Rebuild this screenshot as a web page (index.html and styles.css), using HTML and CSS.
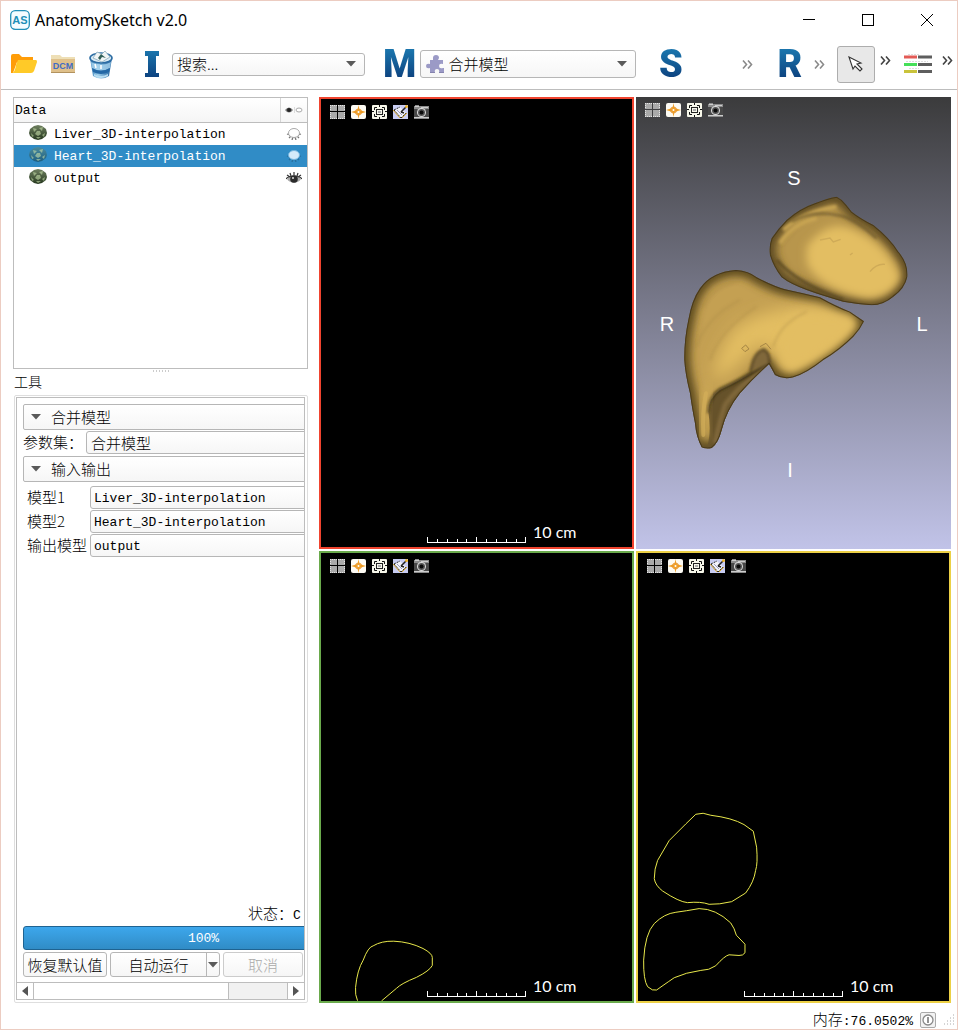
FILE: index.html
```html
<!DOCTYPE html>
<html lang="zh-CN">
<head>
<meta charset="utf-8">
<meta name="viewport" content="width=device-width, initial-scale=1">
<title>AnatomySketch v2.0</title>
<link rel="stylesheet" href="styles.css">
</head>
<body>
<svg class="defs" width="0" height="0" aria-hidden="true">
  <defs>
    <linearGradient id="blue" x1="0" y1="0" x2="0" y2="1"><stop offset="0" stop-color="#1a74ac"/><stop offset="1" stop-color="#0d4380"/></linearGradient>
    <linearGradient id="ball" x1="0" y1="0" x2="0" y2="1"><stop offset="0" stop-color="#6f8060"/><stop offset="1" stop-color="#26381f"/></linearGradient>
    <linearGradient id="ballSel" x1="0" y1="0" x2="0" y2="1"><stop offset="0" stop-color="#4c8b9c"/><stop offset="1" stop-color="#1d5e80"/></linearGradient>
    <linearGradient id="bin" x1="0" y1="0" x2="1" y2="0"><stop offset="0" stop-color="#2f78b4"/><stop offset=".35" stop-color="#9fd0ec"/><stop offset="1" stop-color="#1f5f9c"/></linearGradient>
    <symbol id="i-grid" viewBox="0 0 15 14"><path fill="#a9a9a9" d="M0 0h7v6H0zM8 0h7v6H8zM0 7h7v7H0zM8 7h7v7H8z"/><path stroke="#e4e4e4" stroke-dasharray="1 1" d="M0 .5h7M8 .5h7M0 13.500h7M8 13.500h7M.5 0v6M.5 7v7M14.500 0v6M14.500 7v7"/></symbol>
    <symbol id="i-cross" viewBox="0 0 15 14"><rect width="15" height="14" rx="2" fill="#fdfbf4"/><path fill="#f0a028" d="M7.500 0l1 5L15 7 8.500 9l-1 5-1-5L0 7l6.500-2z"/><circle cx="7.500" cy="7" r="3" fill="none" stroke="#e9962a"/><circle cx="7.500" cy="7" r="1" fill="#fff"/></symbol>
    <symbol id="i-target" viewBox="0 0 15 14"><rect width="15" height="14" rx="1" fill="#f7f7ea"/><path fill="none" stroke="#111" d="M2.500 5V2.500H5M10 2.500h2.500V5M2.500 9v2.500H5M10 11.500h2.500V9M7.500 0v2M7.500 12v2M0 6.500h2M13 6.500h2"/><rect x="4.500" y="4.500" width="6" height="5" fill="none" stroke="#222"/><rect x="6.500" y="6.500" width="2" height="1" fill="#fff" stroke="#aaa"/></symbol>
    <symbol id="i-note" viewBox="0 0 15 14"><rect width="15" height="14" fill="#c9cdf2"/><path d="M1 5l6-3 6 6-5 5z" fill="#f4f4fb"/><path d="M1 5l6-3M1 5l7 8M8 13l5-5" stroke="#222" stroke-dasharray="2 1"/><path d="M0 5l7 8" stroke="#d9a92d"/><path d="M9 13l5-5" stroke="#d9a92d"/><path d="M13 2L8 7M8 7l3 1" stroke="#222" stroke-width="1.500"/><path d="M4 5l5 5" stroke="#9a9dc4"/><circle cx="13.500" cy="1.500" r="1.500" fill="#efb52e"/></symbol>
    <symbol id="i-camera" viewBox="0 0 15 14"><path d="M0 1h1V0h4v1h10v13H0z" fill="#8c8c8c"/><path d="M0 4h15v8H0z" fill="#484848"/><path d="M1 1.500h4M7 2.500h7M0 12.500h15" stroke="#ccc"/><circle cx="7.500" cy="7.500" r="4.500" fill="#ddd"/><circle cx="7.500" cy="7.500" r="3.500" fill="#555"/><circle cx="7.500" cy="7.500" r="2" fill="#0a0a0a"/></symbol>
    <symbol id="i-more" viewBox="0 0 11 9"><path d="M1 .5l3.500 4L1 8.500M6 .5l3.500 4L6 8.500" fill="none" stroke="currentColor" stroke-width="1.600"/></symbol>
    <symbol id="i-down" viewBox="0 0 10 6"><path d="M0 0h10L5 5.500z" fill="#5a5a5a"/></symbol>
    <symbol id="i-ball" viewBox="0 0 18 15"><path d="M5 1l4-1 4 1 4 3 1 4-1 3-4 3-4 1-4-1-4-3-1-3 1-4z"/><path d="M4 3l4 1-3 3zM10 3l4-1-1 4zM8 6h3l1 3-3 2-3-2zM2 8l3 3-2 1zM13 10l3-2-1 4zM7 12h5l-3 2z" fill="#c4dca9" opacity=".6"/></symbol>
    <symbol id="i-closed" viewBox="0 0 16 12"><path d="M1 6l3 1M3 10l2-2M6 12l1-3M10 12l-1-3M13 10l-2-2M15 6l-3 1" stroke="currentColor" stroke-width="1.300"/><ellipse cx="8" cy="5" rx="5.500" ry="4.500"/></symbol>
    <symbol id="i-open" viewBox="0 0 16 12"><path d="M1 7c3-4 11-4 14 0-3 5-11 5-14 0z" fill="#aaa"/><path d="M1 3l3 2M4 1l1 3M8 0v3M12 1l-1 3M15 3l-3 2M0 7c3-4 13-4 16 0" stroke="#333" stroke-width="1.200" fill="none"/><circle cx="8" cy="7" r="3.800" fill="#2a2a2a"/><circle cx="7" cy="6" r="1" fill="#ddd"/></symbol>
    <symbol id="i-ruler" viewBox="0 0 99 8"><path d="M.5 2v5.500h98V2M49.500 2v5M10.500 4v3M20.500 4v3M30.500 4v3M39.500 4v3M59.500 4v3M69.500 4v3M79.500 4v3M89.500 4v3" fill="none" stroke="#fff" shape-rendering="crispEdges"/></symbol>
  </defs>
</svg>

<div class="window">
  <header class="titlebar">
    <svg class="logo" viewBox="0 0 20 20" width="20" height="20"><rect x=".7" y=".7" width="18.600" height="18.600" rx="4.500" fill="#f4fcff" stroke="#218fb8" stroke-width="1.300"/><text x="10" y="14" text-anchor="middle" class="logo-text">AS</text></svg>
    <h1 class="title">AnatomySketch v2.0</h1>
    <div class="caption-buttons">
      <button aria-label="最小化"><svg width="12" height="12"><path d="M0 5.500h12" stroke="#000"/></svg></button>
      <button aria-label="最大化"><svg width="12" height="12"><rect x=".5" y=".5" width="11" height="11" fill="none" stroke="#000"/></svg></button>
      <button aria-label="关闭"><svg width="12" height="12"><path d="M0 0l12 12M12 0L0 12" stroke="#000"/></svg></button>
    </div>
  </header>

  <nav class="toolbar">
    <div class="files">
      <button aria-label="打开"><svg width="26" height="20" viewBox="0 0 26 20"><path d="M0 2q0-2 2-2h6l3 3h11v5H6L2 19H0z" fill="#ff9d08"/><path d="M7 6h18q1 0 1 2l-3 9q-1 2-3 2H1q3-1 4-8z" fill="#ffca28"/></svg></button>
      <button aria-label="DCM"><svg width="24" height="20" viewBox="0 0 24 20"><path d="M0 1h9l2 2h13v8H0z" fill="#eedfb6"/><path d="M0 5h24v14H0z" fill="#dfc08a"/><path d="M0 18h24v1H0z" fill="#b2925e"/><text x="12" y="15" text-anchor="middle" class="dcm-text">DCM</text></svg></button>
      <button aria-label="删除"><svg width="24" height="29" viewBox="0 0 24 29"><path d="M1 8l3 18q8 5 16 0l3-18z" fill="url(#bin)"/><path d="M2 12q10 6 20 0l-1 6q-9 5-18 0z" fill="#a8d3ee" opacity=".8"/><path d="M3 18q9 5 18 0l-1 4q-8 4-16 0z" fill="#2468a6"/><path d="M5 24q7 4 14 0v2q-7 4-14 0z" fill="#b9def2"/><ellipse cx="12" cy="8" rx="11" ry="5" fill="#dcecf5" stroke="#2c6ca3" stroke-width="1.600"/><path d="M4 8l4-6 5 2 3-3 5 6-8 5z" fill="#f1f5f5" stroke="#7da3b8" stroke-width=".7"/><path d="M9 8l3-4 5 4-4-1-2 3z" fill="#315f58"/><path d="M6 14l1 4M12 15v4" stroke="#fff" stroke-width="1.500"/></svg></button>
    </div>
    <label class="letter letter-i" for="search"><svg width="16" height="30" viewBox="0 0 16 30"><path d="M1 2h14v5h-3v17h3v4H1v-4h3V7H1z" fill="url(#blue)"/></svg></label>
    <div class="combo combo-search"><select id="search" aria-label="搜索"><option>搜索...</option></select><svg class="arrow" width="10" height="6"><use href="#i-down"/></svg></div>
    <label class="letter letter-m" for="model">M</label>
    <div class="combo combo-model"><svg class="puzzle" width="19" height="19" viewBox="0 0 19 19"><path d="M7 5V3q0-3 3-3t3 3l-1 2h5v4q-4-1-4 2t4 2h1v5h-5q1-4-2-4t-2 4H4v-5q-4 1-4-2t4-2V5z" fill="#9b9ac6"/><path d="M4 17.500h5M13 17.500h5" stroke="#8583ae"/></svg><select id="model" aria-label="模型"><option>合并模型</option></select><svg class="arrow" width="10" height="6"><use href="#i-down"/></svg></div>
    <button class="letter letter-s">S</button>
    <button class="more more-s" aria-label="更多"><svg width="11" height="9"><use href="#i-more"/></svg></button>
    <button class="letter letter-r">R</button>
    <button class="more more-r" aria-label="更多"><svg width="11" height="9"><use href="#i-more"/></svg></button>
    <button class="cursor" aria-label="选择"><svg width="16" height="18" viewBox="0 0 16 18"><path d="M1 2l12 6-4 1 5 5-2 2-5-5-2 3z" fill="#fff" stroke="#333" stroke-width="1.100"/></svg></button>
    <button class="more dark" aria-label="更多"><svg width="11" height="9"><use href="#i-more"/></svg></button>
    <button class="lines" aria-label="标签"><svg width="28" height="20" viewBox="0 0 28 20"><path d="M0 3h13" stroke="#e35b56" stroke-width="3"/><path d="M0 10.500h13" stroke="#45df58" stroke-width="3"/><path d="M0 17.500h13" stroke="#c9c33b" stroke-width="3"/><path d="M14 3h14M14 10.500h14M14 17.500h14" stroke="#5e5e5e" stroke-width="3"/><path d="M4 .5h12M2 7.500h22M5 14.500h10" stroke="#ddd" stroke-dasharray="2 1"/></svg></button>
    <button class="more dark" aria-label="更多"><svg width="11" height="9"><use href="#i-more"/></svg></button>
  </nav>

  <main class="workspace">
    <aside class="side">
      <div class="tree">
        <table>
          <thead><tr><th>Data</th><th class="eye"><svg width="18" height="8" viewBox="0 0 18 8"><path d="M0 4q4-5 8 0-4 5-8 0" fill="#777"/><circle cx="4" cy="4" r="2" fill="#222"/><path d="M9.500 1v6" stroke="#ddd"/><ellipse cx="14" cy="4" rx="3" ry="2" fill="#fff" stroke="#aaa"/></svg></th></tr></thead>
          <tbody>
            <tr><td><svg class="ball" width="18" height="15"><use href="#i-ball" fill="url(#ball)"/></svg>Liver_3D-interpolation</td><td class="eye"><svg class="closed" width="16" height="12"><use href="#i-closed"/></svg></td></tr>
            <tr class="selected"><td><svg class="ball" width="18" height="15"><use href="#i-ball" fill="url(#ballSel)"/></svg>Heart_3D-interpolation</td><td class="eye"><svg class="closed" width="16" height="12"><use href="#i-closed"/></svg></td></tr>
            <tr><td><svg class="ball" width="18" height="15"><use href="#i-ball" fill="url(#ball)"/></svg>output</td><td class="eye"><svg width="16" height="12"><use href="#i-open"/></svg></td></tr>
          </tbody>
        </table>
      </div>
      <div class="splitter"></div>
      <h2 class="panel-title">工具</h2>
      <section class="tool-frame">
        <div class="tool-scroll">
          <div class="tool-body">
            <button class="section"><svg width="10" height="6"><use href="#i-down"/></svg>合并模型</button>
            <div class="field preset"><label for="preset">参数集：</label><select id="preset"><option>合并模型</option></select></div>
            <button class="section"><svg width="10" height="6"><use href="#i-down"/></svg>输入输出</button>
            <div class="fields">
              <div class="field"><label for="m1">模型1</label><select id="m1" class="mono"><option>Liver_3D-interpolation</option></select></div>
              <div class="field"><label for="m2">模型2</label><select id="m2" class="mono"><option>Heart_3D-interpolation</option></select></div>
              <div class="field"><label for="out">输出模型</label><select id="out" class="mono"><option>output</option></select></div>
            </div>
            <div class="run">
              <p class="state">状态：<span class="mono">C</span></p>
              <div class="progress" role="progressbar" aria-valuenow="100" aria-valuemin="0" aria-valuemax="100">100%</div>
              <div class="actions">
                <button class="btn btn-reset">恢复默认值</button>
                <div class="btn split"><button class="split-main">自动运行</button><button class="split-arrow" aria-label="选项"><svg width="10" height="6"><use href="#i-down"/></svg></button></div>
                <button class="btn btn-cancel" disabled>取消</button>
              </div>
            </div>
          </div>
          <div class="hscroll">
            <button aria-label="向左"><svg width="6" height="10"><path d="M6 0v10L0 5z" fill="#555"/></svg></button>
            <div class="track"><div class="thumb"></div></div>
            <button aria-label="向右"><svg width="6" height="10"><path d="M0 0v10l6-5z" fill="#555"/></svg></button>
          </div>
        </div>
      </section>
    </aside>

    <div class="views">
      <section class="view view-red">
        <div class="view-tools">
          <button aria-label="布局"><svg><use href="#i-grid"/></svg></button><button aria-label="十字线"><svg><use href="#i-cross"/></svg></button><button aria-label="适应"><svg><use href="#i-target"/></svg></button><button aria-label="标注"><svg><use href="#i-note"/></svg></button><button aria-label="截图"><svg><use href="#i-camera"/></svg></button>
        </div>
        <div class="scale"><svg width="99" height="8"><use href="#i-ruler"/></svg><span>10 cm</span></div>
      </section>

      <section class="view view-3d">
        <svg class="scene" viewBox="0 0 315 452">
          <defs>
            <filter id="b4" x="-30%" y="-30%" width="160%" height="160%"><feGaussianBlur stdDeviation="5"/></filter>
            <filter id="b12" x="-30%" y="-30%" width="160%" height="160%"><feGaussianBlur stdDeviation="13"/></filter>
            <filter id="b24" x="-50%" y="-50%" width="200%" height="200%"><feGaussianBlur stdDeviation="22"/></filter>
            <path id="heart" d="M530 110L545 120Q560 135 575 155Q600 175 640 195Q690 235 715 275Q745 310 742 350Q735 385 700 410Q670 435 635 436Q590 432 550 425Q480 405 440 390Q390 372 365 352Q340 320 330 285Q326 260 335 235Q355 205 380 180Q420 145 465 130Q500 115 530 110Z"/>
            <path id="liver" d="M228 330Q265 332 290 352Q340 378 375 388Q430 400 480 412Q530 440 570 455L612 484Q600 510 580 530Q540 570 490 600Q440 640 400 652Q370 660 345 645Q335 625 327 612Q280 655 240 700Q200 750 185 810Q175 850 155 864Q140 868 125 862Q108 830 105 790Q95 740 90 700Q75 640 73 600Q72 540 85 480Q95 420 120 385Q155 335 228 330Z"/>
            <clipPath id="heartClip"><use href="#heart"/></clipPath>
            <clipPath id="liverClip"><use href="#liver"/></clipPath>
          </defs>
          <g transform="translate(24 63) scale(.3333)">
            <g clip-path="url(#heartClip)">
              <use href="#heart" fill="#b8964c"/>
              <use href="#heart" fill="none" stroke="#5b4921" stroke-width="38" filter="url(#b12)"/>
              <path d="M440 260Q500 180 570 205Q680 250 720 350Q700 410 620 415Q480 390 440 310Z" fill="#e3be62" filter="url(#b12)"/>
              <path d="M370 210Q430 155 530 140M360 250Q400 190 470 175" stroke="#c9a553" stroke-width="12" fill="none" filter="url(#b4)"/>
              <path d="M395 185Q460 150 530 165Q580 170 650 235" stroke="#6b5629" stroke-width="6" fill="none" filter="url(#b4)"/>
              <path d="M350 300Q410 370 550 420" stroke="#5b4921" stroke-width="8" fill="none" filter="url(#b4)"/>
              <path d="M480 240l30-6 10 12 22-8M570 285l8-6M630 335q20-25 45-22" stroke="#cfab58" stroke-width="4" fill="none"/>
              <use href="#heart" fill="none" stroke="#493a1b" stroke-width="6"/>
            </g>
            <g clip-path="url(#liverClip)">
              <use href="#liver" fill="#c4a052"/>
              <use href="#liver" fill="none" stroke="#58461f" stroke-width="36" filter="url(#b12)"/>
              <path d="M230 500Q340 430 500 440L590 485Q520 590 390 635Q340 570 300 550Q210 640 160 660Q170 570 230 500Z" fill="#e3be62" filter="url(#b24)"/>
              <path d="M400 460L570 470L590 490Q540 560 390 635Q350 600 360 540Z" fill="#e3be62" filter="url(#b12)"/>
              <path d="M130 440Q160 380 230 365M110 560Q140 470 240 420M150 600Q180 510 290 440M340 560Q360 490 440 455" stroke="#a58544" stroke-width="5" fill="none" filter="url(#b4)" opacity=".4"/>
              <path d="M330 608Q245 660 180 690Q145 715 145 755Q155 820 140 866L190 860L220 740L340 630Z" fill="#66522a"/>
              <path d="M320 618Q230 685 195 735Q180 780 165 850" stroke="#80683a" stroke-width="14" fill="none" filter="url(#b4)"/>
              <path d="M325 606Q265 650 180 688Q145 712 143 760" stroke="#302611" stroke-width="7" fill="none" filter="url(#b4)"/>
              <path d="M272 635Q278 580 310 568Q330 575 328 610" fill="#80683a" stroke="#45361b" stroke-width="6" filter="url(#b4)"/>
              <path d="M150 675Q128 700 126 760L130 830" stroke="#cba755" stroke-width="20" stroke-linecap="round" fill="none" filter="url(#b12)"/>
              <path d="M138 700Q126 760 130 825" stroke="#d6b15a" stroke-width="12" stroke-linecap="round" fill="none"  opacity=".6"/>
              <path d="M300 560l18-10 15 18M245 565l12-10 10 12-12 8z" stroke="#a58544" stroke-width="3" fill="none"/>
              <use href="#liver" fill="none" stroke="#493a1b" stroke-width="6"/>
            </g>
          </g>
          <g class="axis"><text x="158" y="88">S</text><text x="31" y="234">R</text><text x="286" y="234">L</text><text x="154" y="380">I</text></g>
        </svg>
        <div class="view-tools">
          <button aria-label="布局"><svg><use href="#i-grid"/></svg></button><button aria-label="十字线"><svg><use href="#i-cross"/></svg></button><button aria-label="适应"><svg><use href="#i-target"/></svg></button><button aria-label="截图"><svg><use href="#i-camera"/></svg></button>
        </div>
      </section>

      <section class="view view-green">
        <svg class="scene contour" viewBox="0 0 312 448" preserveAspectRatio="xMinYMax meet"><path transform="translate(-1 347) scale(.3333)" d="M113 302Q105 285 107 262Q112 210 130 180Q145 140 160 137Q185 122 222 123Q270 125 310 145Q338 160 338 172V196Q330 212 290 232Q245 250 230 265L185 303"/></svg>
        <div class="view-tools">
          <button aria-label="布局"><svg><use href="#i-grid"/></svg></button><button aria-label="十字线"><svg><use href="#i-cross"/></svg></button><button aria-label="适应"><svg><use href="#i-target"/></svg></button><button aria-label="标注"><svg><use href="#i-note"/></svg></button><button aria-label="截图"><svg><use href="#i-camera"/></svg></button>
        </div>
        <div class="scale"><svg width="99" height="8"><use href="#i-ruler"/></svg><span>10 cm</span></div>
      </section>

      <section class="view view-yellow">
        <svg class="scene contour" viewBox="0 0 312 448" preserveAspectRatio="xMinYMax meet"><path transform="translate(-2 247) scale(.3333)" d="M180 41L202 38L225 44Q290 52 325 72L353 92L363 140Q367 190 360 210Q355 245 330 278L288 304Q250 313 220 312Q195 303 155 307Q130 305 80 272Q58 255 55 235Q55 205 65 180L100 120L150 70ZM190 325Q240 325 285 368Q297 385 302 405L328 432V458Q322 467 310 466L280 464Q267 467 240 497Q220 511 195 511Q150 517 115 533Q80 557 62 570Q50 574 35 560Q22 540 23 480Q27 400 55 370Q85 340 120 336Q150 332 190 325Z"/></svg>
        <div class="view-tools">
          <button aria-label="布局"><svg><use href="#i-grid"/></svg></button><button aria-label="十字线"><svg><use href="#i-cross"/></svg></button><button aria-label="适应"><svg><use href="#i-target"/></svg></button><button aria-label="标注"><svg><use href="#i-note"/></svg></button><button aria-label="截图"><svg><use href="#i-camera"/></svg></button>
        </div>
        <div class="scale"><svg width="99" height="8"><use href="#i-ruler"/></svg><span>10 cm</span></div>
      </section>
    </div>
  </main>

  <footer class="status">
    <span>内存<span class="mono">:76.0502%</span></span>
    <button aria-label="信息"><svg width="16" height="16" viewBox="0 0 16 16"><rect x=".5" y=".5" width="15" height="15" rx="1.500" fill="#f2f2f2" stroke="#aaa"/><circle cx="8" cy="8" r="5" fill="#fff" stroke="#888" stroke-width="1.300"/><path d="M8 5v6" stroke="#777" stroke-width="1.600"/></svg></button>
    <svg width="12" height="12"><path d="M10 1h1M7 4h1M10 4h1M4 7h1M7 7h1M10 7h1M1 10h1M4 10h1M7 10h1M10 10h1" stroke="#aaa"/></svg>
  </footer>
</div>
</body>
</html>
```
FILE: styles.css
```css
* { box-sizing: border-box; }

body {
  margin: 0;
  background: #fff;
  color: #000;
  font: 300 15px/20px "Noto Sans CJK SC", sans-serif;
}

button, select {
  margin: 0;
  padding: 0;
  border: 0;
  background: none;
  color: inherit;
  font: inherit;
}

svg { display: block; flex: none; }
.defs { position: absolute; }
.mono { font-family: "Liberation Mono", monospace; font-size: 13px; font-weight: 400; }

.window {
  display: flex;
  flex-direction: column;
  min-height: 100vh;
  border: 1px solid #ecccc1;
}

/* Title bar */
.titlebar { display: flex; align-items: center; height: 37px; padding: 0 24px 0 9px; }
.logo-text { font: bold 11px "Liberation Sans", sans-serif; fill: #218fb8; }
.title { flex: 1; margin: 0 0 0 5px; font: 400 16px/20px "Noto Sans", sans-serif; }
.caption-buttons { display: flex; gap: 47px; }

/* Toolbar */
.toolbar {
  display: flex;
  align-items: center;
  height: 52px;
  padding: 1px 4px 0 0;
  border-bottom: 1px solid #bdbdbd;
}
.files { display: flex; align-items: center; gap: 14px; width: 143px; padding-left: 10px; }
.dcm-text { font: bold 9px "Liberation Sans", sans-serif; fill: #3f6cc4; }
.letter {
  background: linear-gradient(#1a74ac 20%, #0d4380 80%);
  background-clip: text;
  color: transparent;
  font: 900 38px/46px Roboto, sans-serif;
  text-align: center;
}
.letter-i { width: 16px; margin-right: 12px; background: none; }
.letter-m { width: 34px; margin: 0 3px 0 18px; }
.letter-s { width: 24px; margin-left: 23px; }
.letter-r { width: 26px; }
.more-s { margin: 0 24px 0 59px; }
.more-r { margin: 0 12px 0 11px; }
.more { color: #8a8a8a; }
.dark { margin: 0 5px 8px; color: #444; }
.lines { margin: 0 5px 0 8px; }
.toolbar > .dark:last-child { margin-right: 0; }
.cursor {
  display: flex;
  align-items: center;
  justify-content: center;
  width: 38px;
  height: 37px;
  border: 1px solid #adadad;
  border-radius: 3px;
  background: #e8e8e8;
}

.combo { position: relative; }
.combo-search { flex: 193 1 0; }
.combo-model { flex: 217 1 0; }
select {
  width: 100%;
  height: 23px;
  padding: 0 4px;
  border: 1px solid #b6b6b6;
  border-radius: 3px;
  background: linear-gradient(#fff, #f6f6f6);
  appearance: none;
}
.combo select { display: block; }
.combo-model select { height: 28px; padding-left: 28px; }
.arrow { position: absolute; right: 9px; top: 50%; margin-top: -3px; pointer-events: none; }
.puzzle { position: absolute; left: 6px; top: 5px; pointer-events: none; }

/* Workspace */
.workspace {
  flex: 1;
  display: grid;
  grid-template-columns: minmax(0, 295fr) minmax(0, 632fr);
  gap: 11px;
  padding: 7px 6px 0 12px;
}
.side { display: flex; flex-direction: column; min-width: 0; }

.tree { height: 272px; border: 1px solid #bdbdbd; }
.tree table {
  width: 100%;
  border-collapse: collapse;
  font: 13px/20px "Liberation Mono", monospace;
}
.tree th {
  height: 24px;
  padding: 3px 0 0 1px;
  border-bottom: 1px solid #bdbdbd;
  background: linear-gradient(#fff, #f5f5f5);
  font-weight: 400;
  text-align: left;
}
.tree td { height: 22px; padding: 2px 0 0 15px; white-space: nowrap; }
.tree .eye { width: 27px; padding: 0 0 0 6px; }
.tree th.eye { padding-left: 4px; border-left: 1px solid #d5d5d5; }
.ball { display: inline-block; margin-right: 7px; vertical-align: -2px; }
.closed { color: #777; fill: #fff; stroke: #aaa; }
.selected { background: #308cc6; color: #fff; }
.selected .closed { color: #286f9e; fill: #d4eafa; stroke: #75b5df; }

.splitter { align-self: center; width: 17px; height: 5px; background: radial-gradient(circle, #ccc 1px, transparent 1px) 0 0 / 3px 4px repeat-x; }
.panel-title { margin: -2px 0 4px 1px; font-size: 14px; font-weight: 300; line-height: 19px; }

.tool-frame {
  flex: 1;
  display: flex;
  margin-left: 1px;
  padding: 1px 2px 2px 1px;
  border: 1px solid #dedede;
  border-radius: 2px;
}
.tool-scroll {
  flex: 1;
  display: flex;
  flex-direction: column;
  min-width: 0;
  overflow: hidden;
  border: 1px solid #bdbdbd;
}
.tool-body { flex: 1; display: flex; flex-direction: column; width: calc(100% + 86px); padding: 6px 6px 5px; }

.section {
  display: flex;
  align-items: center;
  gap: 10px;
  height: 26px;
  padding-left: 7px;
  border: 1px solid #b6b6b6;
  border-radius: 2px;
  background: linear-gradient(#fff, #f6f6f6);
}
.field { display: flex; align-items: center; }
.field label { flex: none; width: 63px; white-space: nowrap; line-height: 18px; padding-bottom: 2px; }
.preset { margin: 1px 0 2px; }
.fields { display: flex; flex-direction: column; gap: 1px; padding: 4px 0 0 4px; }
.fields select { padding: 2px 0 0 3px; }

.run { margin-top: auto; }
.state { margin: 0 0 1px 225px; line-height: 18px; }
.progress {
  height: 24px;
  border: 1px solid #1f6391;
  border-radius: 3px;
  background: linear-gradient(#3da7ec, #308cc6);
  color: #fff;
  font: 13px/24px "Liberation Mono", monospace;
  text-align: center;
}
.actions { display: flex; gap: 3px; margin-top: 2px; }
.btn {
  height: 25px;
  border: 1px solid #b6b6b6;
  border-radius: 3px;
  background: linear-gradient(#fff, #f6f6f6);
  white-space: nowrap;
}
.btn-reset { width: 84px; }
.split { display: flex; width: 110px; }
.split-main { flex: 1; }
.split-arrow { display: flex; align-items: center; padding: 0 1px; border-left: 1px solid #b6b6b6; }
.btn-cancel { width: 80px; border-color: #ccc; color: #aaa; }

.hscroll { display: flex; height: 17px; border-top: 1px solid #bdbdbd; }
.hscroll button { display: flex; align-items: center; justify-content: center; width: 16px; }
.track { flex: 1; border: solid #bdbdbd; border-width: 0 1px; background: #f1f1f1; }
.thumb { width: 77%; height: 100%; border-right: 1px solid #bdbdbd; background: #fff; }

/* Views */
.views {
  display: grid;
  grid-template-columns: repeat(2, minmax(0, 1fr));
  grid-template-rows: repeat(2, minmax(0, 1fr));
  gap: 2px;
}
.view {
  position: relative;
  display: flex;
  flex-direction: column;
  justify-content: space-between;
  min-height: 240px;
  background: #000;
  color: #fff;
}
.view-red { border: 2px solid #f0442f; }
.view-green { border: 2px solid #6aaa4c; }
.view-yellow { border: 2px solid #ecd046; }
.view-3d { background: linear-gradient(#3b3b3c, #c1c3e8); }
.view-tools { position: relative; display: flex; gap: 6px; padding: 6px 9px; }
.view-tools svg { width: 15px; height: 14px; }
.scene { position: absolute; inset: 0; width: 100%; height: 100%; }
.contour path { fill: none; stroke: #e9e94b; stroke-width: 3; }
.axis { font: 20px "Liberation Sans", sans-serif; fill: #fff; text-anchor: middle; }

.scale {
  position: relative;
  display: grid;
  grid-template-columns: 1fr auto 1fr;
  align-items: end;
  gap: 7px;
  padding-bottom: 4px;
  font: 400 16px/22px Lato, sans-serif;
}
.scale svg { grid-column: 2; }

/* Status bar */
.status {
  display: flex;
  align-items: center;
  justify-content: flex-end;
  gap: 7px;
  height: 26px;
  padding: 8px 2px 0 0;
  line-height: 18px;
}
```
